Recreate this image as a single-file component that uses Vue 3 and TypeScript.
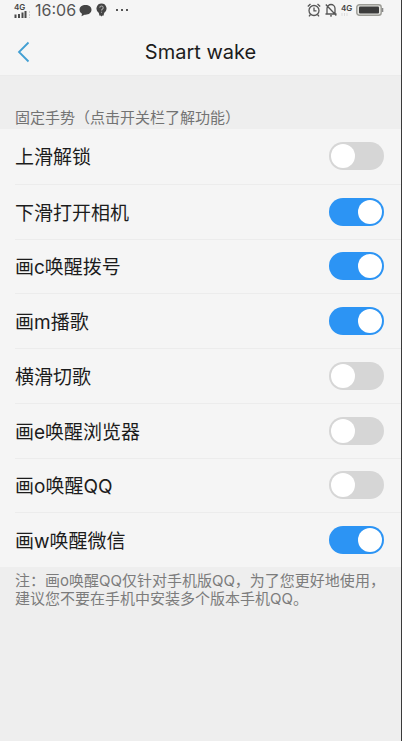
<script setup lang="ts">
import { ref } from 'vue'

interface Gesture {
  id: string
  label: string
  enabled: boolean
}

const gestures = ref<Gesture[]>([
  { id: 'swipe-up', label: '上滑解锁', enabled: false },
  { id: 'swipe-down', label: '下滑打开相机', enabled: true },
  { id: 'draw-c', label: '画c唤醒拨号', enabled: true },
  { id: 'draw-m', label: '画m播歌', enabled: true },
  { id: 'swipe-across', label: '横滑切歌', enabled: false },
  { id: 'draw-e', label: '画e唤醒浏览器', enabled: false },
  { id: 'draw-o', label: '画o唤醒QQ', enabled: false },
  { id: 'draw-w', label: '画w唤醒微信', enabled: true },
])
</script>

<template>
  <div class="screen">
    <header class="top">
      <div class="status">
        <div class="status-group">
          <div class="signal">
            <span class="net">4G</span>
            <svg width="17" height="7" viewBox="0 0 17 7" aria-hidden="true">
              <path d="M.5 3.500h2V7h-2zM4 3h2v4H4zM7.500 1.500h2V7h-2zM10.500 0h2v7h-2z" fill="#4a4a4a" />
              <path d="M15.500 0v7" stroke="#cfcfcf" stroke-dasharray="2 1" />
            </svg>
          </div>
          <span class="clock">16:06</span>
          <svg class="chat" width="13" height="13" viewBox="0 0 13 13" aria-hidden="true">
            <path d="M6.500 1C3 1 .5 3 .5 5.800c0 1.700 1 3.100 2.500 4l-.5 2.400 3-1.500c4 .4 7-1.700 7-4.900C12.500 3 10 1 6.500 1z" fill="#444" />
          </svg>
          <svg class="bulb" width="11" height="14" viewBox="0 0 11 14" aria-hidden="true">
            <path d="M5.500.5a5 5 0 0 0-3 9L3.200 11v1.500h1.300l1 1 1-1h1.300V11l.7-1.500a5 5 0 0 0-3-9z" fill="#444" />
            <path d="M3.800 4.700a1.700 1.700 0 1 1 2.500 1.500c-.6.400-.8.700-.8 1.300M5.500 8.700v1" fill="none" stroke="#aaa" stroke-width="1.100" />
          </svg>
          <svg class="dots" width="14" height="4" viewBox="0 0 14 4" aria-hidden="true">
            <path d="M1 1h2v2H1zM6 1h2v2H6zM11 1h2v2h-2z" fill="#555" />
          </svg>
        </div>
        <div class="status-group right">
          <svg width="14" height="14" viewBox="0 0 14 14" fill="none" stroke="#555" stroke-width="1.300" aria-hidden="true">
            <circle cx="7" cy="7.500" r="5" />
            <path d="M7 4.500v3.300h2.500M.8 3.500 3.500 1M13.200 3.500 10.500 1M3.500 11.500 2 13.300M10.500 11.500l1.500 1.800" />
          </svg>
          <svg width="12" height="14" viewBox="0 0 12 14" fill="none" stroke="#555" stroke-width="1.300" aria-hidden="true">
            <path d="M2 11V5.500A4 4 0 0 1 6 1.500a4 4 0 0 1 4 4V11M.5 11h11M.8 1.500l10.500 11M5 12.800h2" />
          </svg>
          <div class="signal second">
            <span class="net">4G</span>
            <svg width="8" height="4" viewBox="0 0 8 4" aria-hidden="true">
              <path d="M1 1v3M3.500 1v3M6 1v3" stroke="#ddd" />
            </svg>
          </div>
          <svg class="battery" width="28" height="12" viewBox="0 0 28 12" aria-hidden="true">
            <rect x=".8" y=".8" width="24.400" height="10.400" rx="2.500" fill="#e6e6e2" stroke="#9c9c96" stroke-width="1.400" />
            <rect x="3" y="2.500" width="20" height="7" rx="1" fill="#3c3c3c" />
            <path d="M26.500 4v4" stroke="#888" stroke-width="1.600" />
          </svg>
        </div>
      </div>
      <nav class="bar">
        <button class="back" type="button" aria-label="返回">
          <svg width="14" height="22" viewBox="0 0 14 22" aria-hidden="true">
            <path d="M11.500 1.500 2 11l9.500 9.500" fill="none" stroke="#429fd3" stroke-width="1.800" />
          </svg>
        </button>
        <h1>Smart wake</h1>
      </nav>
    </header>

    <main>
      <h2>固定手势（点击开关栏了解功能）</h2>
      <ul class="list">
        <li v-for="item in gestures" :key="item.id">
          <label :for="item.id">{{ item.label }}</label>
          <input :id="item.id" v-model="item.enabled" class="switch" type="checkbox" role="switch" />
        </li>
      </ul>
      <p class="note">注：画o唤醒QQ仅针对手机版QQ，为了您更好地使用，<br />建议您不要在手机中安装多个版本手机QQ。</p>
    </main>
  </div>
</template>

<style>
body {
  margin: 0;
  background: #eeeeee;
}
</style>

<style scoped>
.screen {
  box-sizing: border-box;
  min-height: 100vh;
  border-right: 1px solid #3a3a3a;
  background: #eeeeee;
  color: #1c1c1c;
  font-family: Inter, "Noto Sans CJK SC", sans-serif;
}

.top {
  background: #f5f5f5;
  border-bottom: 1px solid #ebebeb;
}

.status {
  display: flex;
  justify-content: space-between;
  align-items: center;
  height: 20px;
  padding: 0 17px 0 14px;
}

.status-group {
  display: flex;
  align-items: center;
}

.right {
  gap: 4px;
}

.signal {
  display: flex;
  flex-direction: column;
  width: 20px;
}

.second {
  width: 11px;
}

.net {
  font-size: 8px;
  line-height: 8px;
  font-weight: 600;
  color: #444;
}

.clock {
  font-size: 16px;
  line-height: 20px;
  color: #555;
  margin-left: 1px;
}

.chat {
  margin-left: 3px;
}

.bulb {
  margin-left: 4px;
}

.dots {
  margin-left: 8px;
}

.bar {
  display: grid;
  grid-template-columns: 48px 1fr 48px;
  align-items: center;
  height: 46px;
  padding: 9px 0 0;
}

.back {
  display: flex;
  align-items: center;
  height: 44px;
  padding: 0 0 0 17px;
  border: 0;
  background: none;
}

h1 {
  margin: 0;
  text-align: center;
  font-size: 20px;
  line-height: 28px;
  font-weight: 400;
}

h2 {
  margin: 0;
  padding: 31px 15px 0;
  font-size: 15px;
  line-height: 22px;
  font-weight: 400;
  color: #737373;
  white-space: nowrap;
}

.list {
  display: grid;
  grid-template-rows: repeat(8, 1fr);
  min-height: 438px;
  margin: 0;
  padding: 0 0 0 15px;
  list-style: none;
  background: #f5f5f5;
}

li {
  display: flex;
  align-items: center;
  justify-content: space-between;
  padding-right: 17px;
}

li + li {
  border-top: 1px solid #ececec;
}

label {
  flex: 1;
  padding-top: 4px;
  font-size: 19px;
  line-height: 28px;
}

.switch {
  appearance: none;
  display: flex;
  box-sizing: border-box;
  width: 55px;
  height: 28px;
  margin: 0;
  padding: 2px;
  border-radius: 14px;
  background: #d6d6d6;
}

.switch::before {
  content: "";
  width: 24px;
  height: 24px;
  border-radius: 50%;
  background: #ffffff;
}

.switch:checked {
  justify-content: flex-end;
  background: #2c94f4;
}

.note {
  margin: 0;
  padding: 5px 0 0 15px;
  font-size: 15px;
  line-height: 18px;
  color: #7c7c7c;
  white-space: nowrap;
}
</style>
